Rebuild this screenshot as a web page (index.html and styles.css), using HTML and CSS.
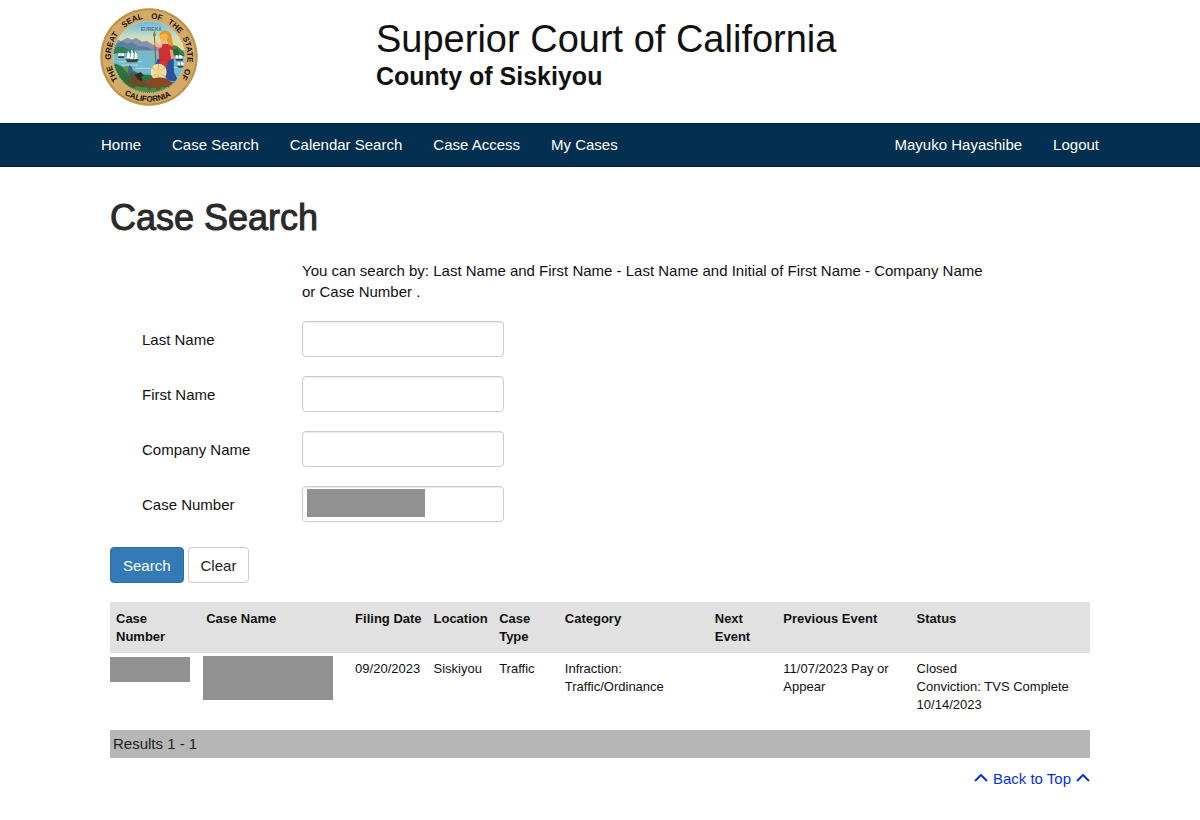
FILE: index.html
```html
<!DOCTYPE html>
<html lang="en">
<head>
<meta charset="utf-8">
<title>Case Search - Superior Court of California, County of Siskiyou</title>
<link rel="stylesheet" href="styles.css">
</head>
<body>
<header class="masthead" id="top">
  <div class="wrap masthead-inner">
    <svg class="seal" viewBox="14 11 294 294" role="img" aria-label="Great Seal of the State of California">
      <defs>
        <path id="arc-top" d="M161 273A115 115 0 1 1 161.1 273"/>
        <path id="arc-bottom" d="M24 155A137 137 0 0 0 298 155"/>
        <clipPath id="scene"><circle cx="161" cy="158" r="108"/></clipPath>
        <linearGradient id="sky" x1="0" y1="0" x2="0" y2="1">
          <stop offset="0" stop-color="#62b5dc"/><stop offset=".55" stop-color="#c9dfc2"/><stop offset="1" stop-color="#f7df83"/>
        </linearGradient>
      </defs>
      <circle cx="161" cy="158" r="146" fill="#b98b45"/>
      <circle cx="161" cy="158" r="144" fill="none" stroke="#d9ae68" stroke-width="3" stroke-dasharray="4 4"/>
      <circle cx="161" cy="158" r="140" fill="#d3aa66"/>
      <circle cx="161" cy="158" r="108" fill="#78b9c9"/>
      <g clip-path="url(#scene)">
        <path d="M50 48h222v90H50z" fill="url(#sky)"/>
        <path d="M50 118l16-12 12 4 18-10 14 6 12-6 18 12 14-2 22 12 30 6v12H50z" fill="#8a8fb0"/>
        <path d="M50 126l30-15 16 7 14-5 18 12 24 2 24 10H50z" fill="#56829c"/>
        <path d="M50 134c20-10 36-8 48 2 18 0 26 6 30 12l-40 4-38-4z" fill="#317f54"/>
        <path d="M206 134l22-14 18 6 24 20v12l-50-4z" fill="#35864a"/>
        <path d="M222 130l12 8 10-6 8 14 16 8h-40z" fill="#1f6a3b"/>
        <path d="M50 150c30-6 70-4 96 0s82 2 126 6v60H50z" fill="#72bacc"/>
        <path d="M70 172h70M78 182h50M120 192h44M226 190h36" stroke="#a9dce4" stroke-width="3"/>
        <path d="M50 178c16-2 26 10 36 10 8 2 10 12 26 10l22 12 34 2 40 22 56-4v44H50z" fill="#2f7340"/>
        <path d="M84 222l28-12 28 12 20 20-30 12-34-8z" fill="#6e4a2b"/>
        <path d="M80 190l14-6 16 8 4 10-18 4z" fill="#65904b"/>
        <path d="M120 246l40 6 50-4 40-10-10 30H110z" fill="#468f48"/>
        <path d="M97 140c6 0 8 16 5 22l-9-1c4-8 4-14 4-21zM107 136c8 2 10 20 6 28l-9-1c4-9 5-18 3-27zM118 140c8 4 9 16 8 24l-9 1c3-9 3-17 1-25z" fill="#fff"/>
        <path d="M90 165h41l-6 9H96zM68 156h20l-3 5H70zM240 164h24l-3 5h-18zM244 184h24l-4 6h-15z" fill="#473b3a"/>
        <path d="M70 145l6 2v8h-8zM79 145l7 4v6h-8zM242 152l7 2v8h-8zM252 150l9 5v7h-9zM248 174l6 2v7h-7zM257 172l8 5v6h-8z" fill="#fff"/>
        <path d="M177 92l8 145" stroke="#8a5b30" stroke-width="3"/>
        <path d="M177 78l5 15-5 5-4-5z" fill="#a3723b"/>
        <path d="M192 92c4-16 28-20 36 0l6 32-10 8-10-24-18-2z" fill="#e7952a"/>
        <path d="M196 104c4-7 16-6 19 2l-2 13c-5 5-13 4-16 0z" fill="#efb487"/>
        <path d="M193 99c2-15 24-17 27 2l-8 4-18 1z" fill="#f4b63f"/>
        <path d="M190 136l11-17h16l15 9 4 34-12 44-33-2-6-29 6-14z" fill="#cf3031"/>
        <path d="M198 130l-17-2-4-11 6-4 9 8 10 1z" fill="#efb487"/>
        <path d="M222 135l10 3 6 28-13 18-6-4 9-16z" fill="#e6a278"/>
        <path d="M186 164l15 6-10 32-15-1zM219 170l16-8 1 42 14 27-28-2-16-17z" fill="#27529f"/>
        <path d="M193 170l21-2-2 33-20-1z" fill="#e12e30"/>
        <ellipse cx="190" cy="203" rx="24" ry="25" fill="#f0dda2"/>
        <path d="M190 179v47M170 190l40 27M210 189l-38 27" stroke="#d5b466" stroke-width="3"/>
        <circle cx="190" cy="203" r="10" fill="#eed481"/>
        <path d="M160 229c12-11 40-13 58-5l10 11 1 24h-10l-6-15-17 3-3 11h-11l-1-12-12 3-4 8h-9l2-15-9-9z" fill="#8b4527"/>
        <path d="M118 211l18-8 9 10-18 12zM125 226l13-8 4 12z" fill="#302c24"/>
        <path d="M101 182l8 5 5 17-9 2-6 14-5-2 5-20z" fill="#41678a"/>
        <path d="M72 217l22-6 18 13-19 9zM86 232l30 8-8 9-18-6z" fill="#326c35"/>
      </g>
      <circle cx="161" cy="158" r="107" fill="none" stroke="#e9f0d5" stroke-width="2" stroke-dasharray="3 3"/>
      <text class="seal-motto" x="168" y="80">EUREKA</text>
      <g class="seal-text">
        <text><textPath href="#arc-top" startOffset="18.2%">THE</textPath></text>
        <text><textPath href="#arc-top" startOffset="29.6%">GREAT</textPath></text>
        <text><textPath href="#arc-top" startOffset="43.1%">SEAL</textPath></text>
        <text><textPath href="#arc-top" startOffset="53.1%">OF</textPath></text>
        <text><textPath href="#arc-top" startOffset="61.3%">THE</textPath></text>
        <text><textPath href="#arc-top" startOffset="72%">STATE</textPath></text>
        <text><textPath href="#arc-top" startOffset="82%">OF</textPath></text>
        <text><textPath href="#arc-bottom" startOffset="49%">CALIFORNIA</textPath></text>
      </g>
    </svg>
    <div class="court">
      <div class="court-name">Superior Court of California</div>
      <div class="court-county">County of Siskiyou</div>
    </div>
  </div>
</header>
<nav class="navbar" aria-label="Main">
  <div class="wrap navbar-inner">
    <a href="#">Home</a>
    <a href="#">Case Search</a>
    <a href="#">Calendar Search</a>
    <a href="#">Case Access</a>
    <a href="#">My Cases</a>
    <a class="push" href="#">Mayuko Hayashibe</a>
    <a href="#">Logout</a>
  </div>
</nav>
<main class="content">
  <h1>Case Search</h1>
  <form class="search">
    <p class="hint">You can search by: Last Name and First Name - Last Name and Initial of First Name - Company Name or Case Number .</p>
    <div class="field"><label for="last">Last Name</label><input id="last" type="text"></div>
    <div class="field"><label for="first">First Name</label><input id="first" type="text"></div>
    <div class="field"><label for="company">Company Name</label><input id="company" type="text"></div>
    <div class="field"><label for="number">Case Number</label><span class="masked"><input id="number" type="text"><span class="redact redact-input"></span></span></div>
    <div class="actions">
      <button class="btn btn-primary" type="submit">Search</button>
      <button class="btn" type="reset">Clear</button>
    </div>
  </form>
  <table class="results">
    <colgroup>
      <col class="c-number"><col class="c-name"><col class="c-date"><col class="c-loc"><col class="c-type"><col class="c-cat"><col class="c-next"><col class="c-prev"><col class="c-status">
    </colgroup>
    <thead>
      <tr><th scope="col">Case Number</th><th scope="col">Case Name</th><th scope="col">Filing Date</th><th scope="col">Location</th><th scope="col">Case Type</th><th scope="col">Category</th><th scope="col">Next Event</th><th scope="col">Previous Event</th><th scope="col">Status</th></tr>
    </thead>
    <tbody>
      <tr>
        <td class="hidden-number"><div class="redact redact-number"></div></td>
        <td class="hidden-name"><div class="redact redact-name"></div></td>
        <td>09/20/2023</td><td>Siskiyou</td><td>Traffic</td><td>Infraction:<br>Traffic/Ordinance</td><td></td><td>11/07/2023 Pay or Appear</td><td>Closed<br>Conviction: TVS Complete<br>10/14/2023</td>
      </tr>
    </tbody>
  </table>
  <div class="summary">Results 1 - 1</div>
  <div class="to-top">
    <a href="#top"><svg class="caret" viewBox="0 0 14 9" aria-hidden="true"><path d="M1 7l6-6 6 6"/></svg>Back to Top<svg class="caret" viewBox="0 0 14 9" aria-hidden="true"><path d="M1 7l6-6 6 6"/></svg></a>
  </div>
</main>
</body>
</html>
```
FILE: styles.css
```css
* { box-sizing: border-box; }
body {
  margin: 0;
  background: #fff;
  color: #111;
  font: 15px/21px "Liberation Sans", Arial, sans-serif;
}
.wrap { max-width: 1000px; margin: 0 auto; }
.masthead-inner { display: flex; align-items: flex-start; padding: 8px 0 17px; }
.seal { flex: none; width: 98px; height: 98px; }
.seal-text { font-weight: bold; font-size: 24px; fill: #17130d; text-anchor: middle; }
.seal-motto { font-size: 15px; font-weight: bold; fill: #3d7199; text-anchor: middle; }
.court { margin-left: 178px; padding-top: 9px; }
.court-name { font-size: 38px; line-height: 44px; }
.court-county { font-size: 25px; font-weight: bold; line-height: 31px; }
.navbar { background: #032f50; border: 1px solid #0a1b3c; border-width: 1px 0; }
.navbar-inner { display: flex; gap: 31px; padding: 0 1px; }
.navbar a { color: #fff; text-decoration: none; line-height: 42px; white-space: nowrap; }
.navbar .push { margin-left: auto; }
.content { max-width: 980px; margin: 0 auto; }
h1 {
  margin: 30px 0 22px;
  color: #2a2a2a;
  font-size: 36px;
  font-weight: normal;
  line-height: 41px;
  -webkit-text-stroke: 1px #2a2a2a;
}
.hint { margin: 0 100px 19px 192px; }
.field { display: flex; align-items: center; margin-bottom: 19px; padding-left: 32px; }
.field label { width: 160px; }
.field input {
  display: block;
  width: 202px;
  height: 36px;
  padding: 6px 12px;
  border: 1px solid #ccc;
  border-radius: 4px;
  background: #fff;
  box-shadow: inset 0 1px 1px rgba(0, 0, 0, .08);
  font: inherit;
}
.masked { position: relative; }
.redact { background: #919191; }
.redact-input { position: absolute; top: 3px; left: 5px; width: 118px; height: 28px; }
.actions { display: flex; gap: 4px; margin: 25px 0 19px; }
.btn {
  height: 36px;
  padding: 0 12px;
  border: 1px solid #ccc;
  border-radius: 4px;
  background: #fff;
  color: #222;
  font: inherit;
}
.btn-primary { border-color: #2e6da4; background: #337ab7; color: #fff; }
.results {
  width: 100%;
  border-collapse: collapse;
  table-layout: fixed;
  font-size: 13px;
  line-height: 18px;
}
.results th { padding: 8px 0 7px 6px; background: #e1e1e1; text-align: left; vertical-align: top; }
.results th:first-child, .results th:nth-child(7) { padding-right: 12px; }
.results td { padding: 7px 6px 16px; vertical-align: top; }
.results .hidden-number { padding: 4px 10px 0 0; }
.results .hidden-name { padding: 3px 16px 0 3px; }
.redact-number { height: 25px; }
.redact-name { height: 44px; }
.c-number { width: 9.2%; }
.c-name { width: 15.2%; }
.c-date { width: 8%; }
.c-loc { width: 6.7%; }
.c-type { width: 6.7%; }
.c-cat { width: 15.3%; }
.c-next { width: 7%; }
.c-prev { width: 13.6%; }
.c-status { width: 18.3%; }
.summary { padding: 3px; background: #b6b6b6; color: #222; line-height: 22px; }
.to-top { display: flex; justify-content: flex-end; padding-top: 10px; }
.to-top a { display: flex; align-items: center; gap: 5px; color: #0433d6; text-decoration: none; }
.caret { width: 14px; height: 9px; fill: none; stroke: currentColor; stroke-width: 2; }
```
